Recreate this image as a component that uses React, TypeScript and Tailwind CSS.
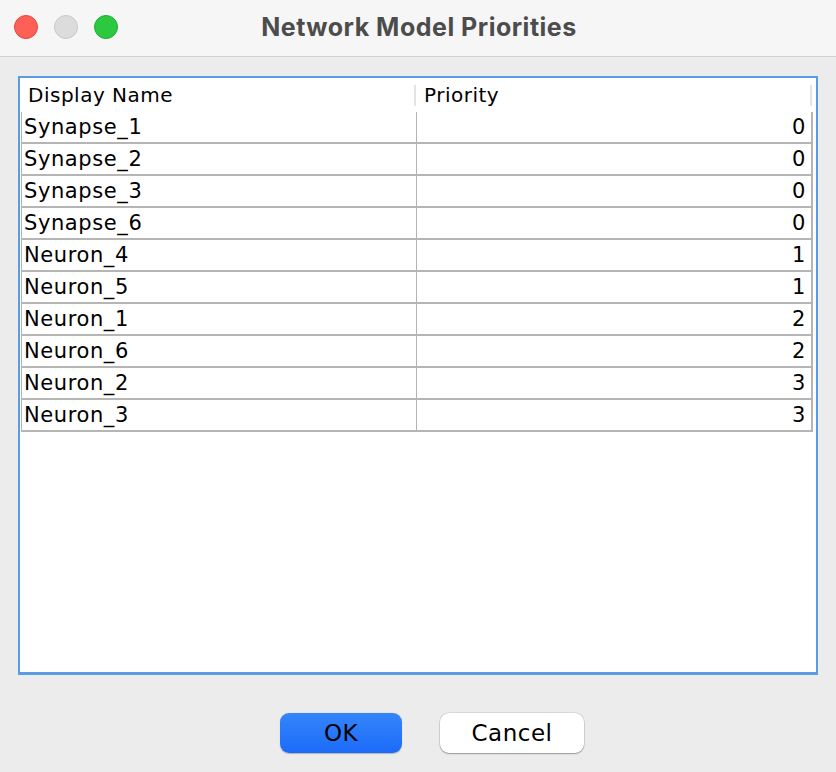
import React from "react";

const rows: [string, number][] = [
  ["Synapse_1", 0],
  ["Synapse_2", 0],
  ["Synapse_3", 0],
  ["Synapse_6", 0],
  ["Neuron_4", 1],
  ["Neuron_5", 1],
  ["Neuron_1", 2],
  ["Neuron_6", 2],
  ["Neuron_2", 3],
  ["Neuron_3", 3],
];

export default function App() {
  return (
    <div className="w-[836px] h-[772px] bg-[#ececec] flex flex-col overflow-hidden">
      <div className="h-[57px] shrink-0 bg-[#f6f6f6] border-b border-[#d2d2d2] flex items-center relative">
        <div className="absolute left-[14px] top-[15px] flex gap-[16px]">
          <div className="w-[24px] h-[24px] rounded-full bg-[#fe5f57] border border-[#e5463f]" />
          <div className="w-[24px] h-[24px] rounded-full bg-[#dcdcdc] border border-[#c9c9c9]" />
          <div className="w-[24px] h-[24px] rounded-full bg-[#2bc840] border border-[#20ad33]" />
        </div>
        <div className="flex-1 text-center font-['Inter',sans-serif] font-bold text-[25px] text-[#4c4c4c] tracking-[0.5px] pl-[2px]">
          Network Model Priorities
        </div>
      </div>
      <div className="pt-[19px] px-[18px]">
        <div className="h-[599px] bg-white border-2 border-b-[3px] border-[#5a9ce4] pl-[1px] pr-[3px] font-['DejaVu_Sans',sans-serif] text-black">
          <div className="h-[34px] flex items-center text-[20px] tracking-[0.5px]">
            <div className="w-[395px] flex items-center pl-[7px] border-r-2 border-[#e4e4e4] h-[21px]">
              <span className="leading-none">Display Name</span>
            </div>
            <div className="w-[396px] flex items-center pl-[8px] border-r-2 border-[#e4e4e4] h-[21px]">
              <span className="leading-none">Priority</span>
            </div>
          </div>
          <div className="w-[792px] border-l border-[#b5b5b5] text-[21px] tracking-[0.6px]">
            {rows.map(([name, p]) => (
              <div key={name} className="h-[32px] flex border-b-2 border-[#b5b5b5]">
                <div className="w-[395px] pl-[2px] flex items-center border-r border-[#b5b5b5] leading-none">
                  {name}
                </div>
                <div className="w-[396px] pr-[5px] flex items-center justify-end border-r-2 border-[#b5b5b5] leading-none">
                  {p}
                </div>
              </div>
            ))}
          </div>
        </div>
      </div>
      <div className="flex justify-center gap-[38px] pt-[38px] pl-[28px]">
        <button className="w-[122px] h-[40px] rounded-[9px] bg-gradient-to-b from-[#3584fb] to-[#1b6bf9] text-black text-[23px] tracking-[0.5px] font-['DejaVu_Sans',sans-serif] shadow-[0_0.5px_1px_rgba(0,0,0,0.25)]">
          OK
        </button>
        <button className="w-[144px] h-[40px] rounded-[9px] bg-white text-black text-[23px] tracking-[0.5px] font-['DejaVu_Sans',sans-serif] shadow-[0_0_0_0.5px_rgba(0,0,0,0.15),0_1px_1.5px_rgba(0,0,0,0.3)]">
          Cancel
        </button>
      </div>
    </div>
  );
}
